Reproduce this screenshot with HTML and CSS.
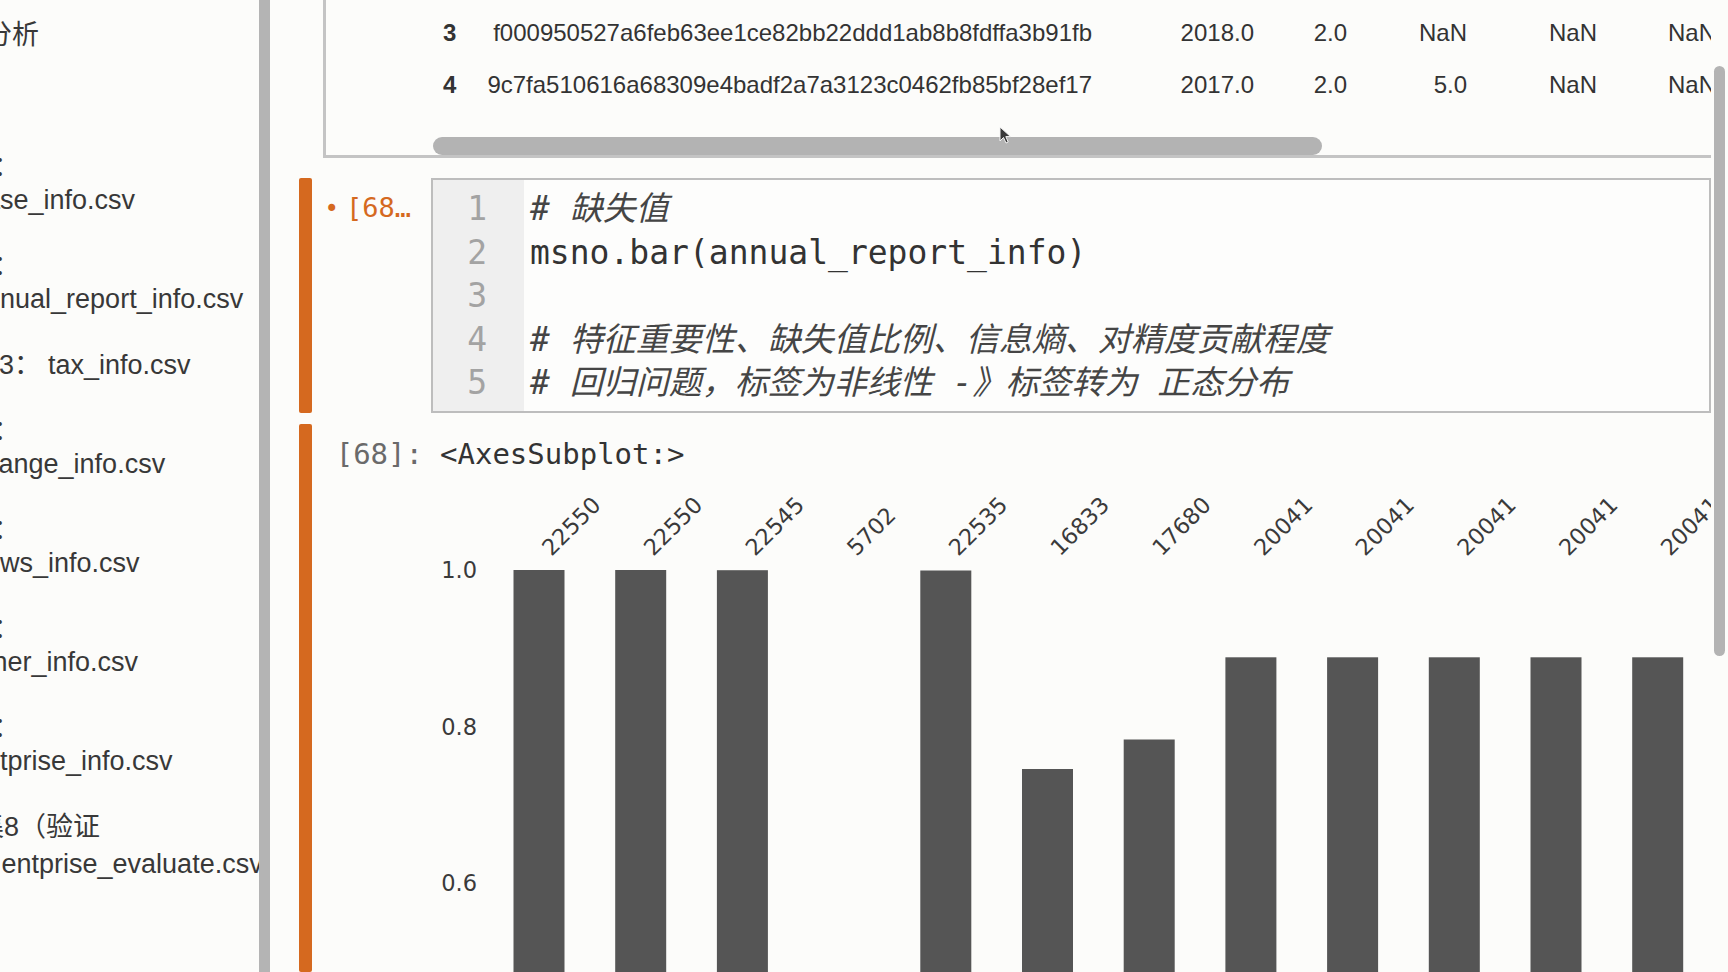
FILE: index.html
```html
<!DOCTYPE html>
<html lang="zh">
<head>
<meta charset="utf-8">
<title>Notebook</title>
<link rel="stylesheet" href="styles.css">
</head>
<body>
<div class="app">
  <aside class="sidebar">
    <div class="toc">
      <div class="toc-title">数据分析</div>
      <p class="item"><span class="ln lead">数据集1：</span><span class="ln">base_info.csv</span></p>
      <p class="item"><span class="ln lead">数据集2：</span><span class="ln">annual_report_info.csv</span></p>
      <p class="item"><span class="ln cut3">数据集3：<span class="fname">tax_info.csv</span></span></p>
      <p class="item"><span class="ln lead">数据集4：</span><span class="ln">change_info.csv</span></p>
      <p class="item"><span class="ln lead">数据集5：</span><span class="ln">news_info.csv</span></p>
      <p class="item"><span class="ln lead">数据集6：</span><span class="ln">other_info.csv</span></p>
      <p class="item"><span class="ln lead">数据集7：</span><span class="ln">entprise_info.csv</span></p>
      <p class="item item-last"><span class="ln cut8">数据集8（验证</span><span class="ln cut8b">集）：entprise_evaluate.csv</span></p>
    </div>
  </aside>
  <div class="side-scroll"></div>
  <main class="main">
    <div class="notebook">
      <div class="prev-output">
        <div class="out-spacer"></div>
        <div class="df-scroll">
          <div class="df">
            <div class="df-row">
              <span class="idx">3</span>
              <span>f000950527a6feb63ee1ce82bb22ddd1ab8b8fdffa3b91fb</span>
              <span>2018.0</span><span>2.0</span><span>NaN</span><span>NaN</span><span>NaN</span>
            </div>
            <div class="df-row">
              <span class="idx">4</span>
              <span>9c7fa510616a68309e4badf2a7a3123c0462fb85bf28ef17</span>
              <span>2017.0</span><span>2.0</span><span>5.0</span><span>NaN</span><span>NaN</span>
            </div>
          </div>
          <div class="hbar"><div class="hthumb"></div></div>
        </div>
      </div>

      <div class="cell cell-in">
        <div class="collapser"></div>
        <div class="in-prompt"><span class="dot">•</span>[68…</div>
        <div class="editor">
          <div class="gutter"><div>1</div><div>2</div><div>3</div><div>4</div><div>5</div></div>
          <div class="code"><div class="cm"># 缺失值</div><div>msno.bar(annual_report_info)</div><div> </div><div class="cm"># 特征重要性、缺失值比例、信息熵、对精度贡献程度</div><div class="cm"># 回归问题，标签为非线性 -》标签转为 正态分布</div></div>
        </div>
      </div>

      <div class="cell cell-out">
        <div class="collapser"></div>
        <div class="out-prompt">[68]:</div>
        <div class="out-body">
          <div class="repr">&lt;AxesSubplot:&gt;</div>
          <svg class="chart" width="1280" height="492" viewBox="0 0 1280 492">
            <g class="ylab">
              <text x="46" y="98" text-anchor="end">1.0</text>
              <text x="46" y="255" text-anchor="end">0.8</text>
              <text x="46" y="411" text-anchor="end">0.6</text>
            </g>
            <g class="bars">
              <rect x="82.5" y="90" width="51" height="410"/>
              <rect x="184.2" y="90" width="51" height="410"/>
              <rect x="285.9" y="90.2" width="51" height="410"/>
              <rect x="387.6" y="676.5" width="51" height="10"/>
              <rect x="489.3" y="90.5" width="51" height="410"/>
              <rect x="591" y="289" width="51" height="211"/>
              <rect x="692.7" y="259.5" width="51" height="241"/>
              <rect x="794.4" y="177.3" width="51" height="323"/>
              <rect x="896.1" y="177.3" width="51" height="323"/>
              <rect x="997.8" y="177.3" width="51" height="323"/>
              <rect x="1099.5" y="177.3" width="51" height="323"/>
              <rect x="1201.2" y="177.3" width="51" height="323"/>
            </g>
            <g class="toplab">
              <text x="120.5" y="77" transform="rotate(-45 120.5 77)">22550</text>
              <text x="222.2" y="77" transform="rotate(-45 222.2 77)">22550</text>
              <text x="323.9" y="77" transform="rotate(-45 323.9 77)">22545</text>
              <text x="425.6" y="77" transform="rotate(-45 425.6 77)">5702</text>
              <text x="527.3" y="77" transform="rotate(-45 527.3 77)">22535</text>
              <text x="629" y="77" transform="rotate(-45 629 77)">16833</text>
              <text x="730.7" y="77" transform="rotate(-45 730.7 77)">17680</text>
              <text x="832.4" y="77" transform="rotate(-45 832.4 77)">20041</text>
              <text x="934.1" y="77" transform="rotate(-45 934.1 77)">20041</text>
              <text x="1035.8" y="77" transform="rotate(-45 1035.8 77)">20041</text>
              <text x="1137.5" y="77" transform="rotate(-45 1137.5 77)">20041</text>
              <text x="1239.2" y="77" transform="rotate(-45 1239.2 77)">20041</text>
            </g>
          </svg>
        </div>
      </div>
    </div>
    <div class="v-gutter"><div class="v-thumb"></div></div>
    <svg class="cursor" width="13" height="19" viewBox="0 0 13 19">
      <path d="M1 1 L1 15 L4.5 11.5 L7 17 L9.2 16 L6.8 10.6 L11.5 10.6 Z" fill="#3a3a3a" stroke="#f4f4f4" stroke-width="1"/>
    </svg>
  </main>
</div>
</body>
</html>
```

FILE: styles.css
```css
* { box-sizing: border-box; }
html, body { margin: 0; padding: 0; }
body {
  width: 1728px;
  height: 972px;
  overflow: hidden;
  background: #fcfcfa;
  color: #333;
}
.app { display: flex; height: 972px; }

/* ---------- left sidebar ---------- */
.sidebar {
  width: 259px;
  flex: none;
  overflow: hidden;
  background: #fcfcfa;
  font-family: "Liberation Sans", "Noto Sans CJK SC", sans-serif;
  font-size: 27px;
  color: #383838;
}
.toc { margin-left: -30px; padding-top: 19px; white-space: nowrap; }
.toc-title { line-height: 33px; margin: 0 0 99px -39px; }
.item { margin: 0 0 33px; line-height: 33px; }
.item-last { line-height: 37px; margin-top: -2px; }
.ln { display: block; }
.lead { margin-left: -73px; }
.cut3 { margin-left: -52px; }
.cut3 .fname { margin-left: 7px; }
.cut8 { margin-left: -47px; }
.cut8b { margin-left: -36px; }
.side-scroll { width: 11px; flex: none; background: #b4b4b4; }

/* ---------- main area ---------- */
.main { flex: 1; display: flex; position: relative; overflow: hidden; }
.notebook { flex: 1; min-width: 0; overflow: hidden; padding-left: 29px; }
.v-gutter { width: 17px; flex: none; padding: 66px 3px 0; }
.v-thumb { width: 11px; height: 590px; border-radius: 6px; background: #b3b3b3; }
.cursor { position: absolute; left: 729px; top: 126px; }

/* previous output (dataframe) */
.prev-output {
  margin-left: 24px;
  display: flex;
  border-left: 3px solid #c4c4c4;
  border-bottom: 3px solid #c4c4c4;
}
.out-spacer { width: 105px; flex: none; }
.df-scroll { flex: 1; min-width: 0; overflow: hidden; }
.df {
  padding-top: 7px;
  font-family: "Liberation Sans", sans-serif;
  font-size: 24px;
  color: #333;
}
.df-row {
  display: grid;
  grid-template-columns: 31px 630px 162px 93px 120px 130px 119px;
  height: 52px;
  align-items: center;
  white-space: nowrap;
  text-align: right;
}
.df-row .idx { text-align: left; padding-left: 12px; font-weight: bold; }
.hbar { height: 44px; padding-top: 26px; }
.hthumb { margin-left: 2px; width: 889px; height: 18px; border-radius: 9px; background: #b3b3b3; }

/* cells */
.cell { display: flex; }
.cell-in { margin-top: 20px; }
.cell-out { margin-top: 11px; }
.collapser { width: 13px; flex: none; background: #d5691f; border-radius: 2px; }
.in-prompt {
  width: 119px;
  flex: none;
  text-align: right;
  padding: 12px 20px 0 0;
  font-family: "DejaVu Sans Mono", monospace;
  font-size: 27px;
  line-height: 36px;
  color: #d5691f;
  white-space: nowrap;
}
.in-prompt .dot { margin-right: 7px; font-size: 24px; }
.editor {
  flex: 1;
  min-width: 0;
  display: flex;
  border: 2px solid #bdbdbd;
  background: #fdfdfc;
}
.gutter, .code {
  font-family: "DejaVu Sans Mono", "Noto Sans CJK SC", monospace;
  font-size: 33px;
  line-height: 43.5px;
}
.gutter {
  width: 91px;
  flex: none;
  background: #efefef;
  padding: 7px 37px 6.5px 0;
  text-align: right;
  color: #a3a3a3;
}
.code { padding: 7px 0 6.5px 6px; color: #333; white-space: pre; }
.code .cm { font-style: italic; color: #454545; }

.out-prompt {
  width: 119px;
  flex: none;
  text-align: right;
  padding: 12px 8px 0 0;
  font-family: "DejaVu Sans Mono", monospace;
  font-size: 29px;
  line-height: 36px;
  color: #6a6a6a;
}
.out-body { flex: 1; min-width: 0; overflow: hidden; }
.repr {
  padding: 12px 0 0 9px;
  font-family: "DejaVu Sans Mono", monospace;
  font-size: 29px;
  line-height: 36px;
  color: #333;
}
.chart { display: block; margin-top: 8px; }
.chart .ylab text, .chart .toplab text {
  font-family: "DejaVu Sans", sans-serif;
  font-size: 22.5px;
  fill: #3a3a3a;
}
.chart .bars rect { fill: #555555; }
```
